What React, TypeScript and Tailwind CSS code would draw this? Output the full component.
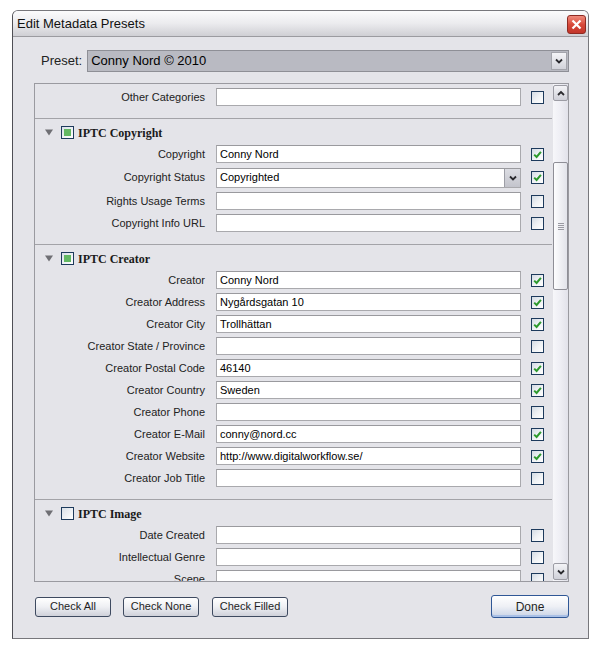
import React from "react";

function Check({ checked = false }: { checked?: boolean }) {
  return (
    <div className="w-[13px] h-[13px] shrink-0 border border-[#1d3a5c] bg-linear-to-br from-[#d3dbe4] via-[#eef1f4] to-[#ffffff] flex items-center justify-center">
      {checked && (
        <svg width="9" height="9" viewBox="0 0 9 9">
          <path d="M1.2 4.6 L3.6 7 L7.9 1.8" stroke="#2e9a2e" strokeWidth="2" fill="none" />
        </svg>
      )}
    </div>
  );
}

function Chevron({ up = false }: { up?: boolean }) {
  return (
    <svg width="8" height="6" viewBox="0 0 8 6">
      <path d={up ? "M1 5 L4 2 L7 5" : "M1 1.5 L4 4.5 L7 1.5"} stroke="#2a2a2e" strokeWidth="1.8" fill="none" />
    </svg>
  );
}

function Row({
  label,
  value = "",
  checked = false,
  select = false,
  tall = false,
}: {
  label: string;
  value?: string;
  checked?: boolean;
  select?: boolean;
  tall?: boolean;
}) {
  return (
    <div className={`flex items-center ${tall ? "h-[25px]" : "h-[22px]"} shrink-0`}>
      <div className="w-[170px] shrink-0 text-right text-[11px] text-[#222] whitespace-nowrap">{label}</div>
      <div
        className={`ml-[11px] w-[305px] shrink-0 ${select ? "h-[20px]" : "h-[18px]"} bg-white border border-[#a9a9ad] border-t-[#9a9a9e] flex items-center pl-[3px] text-[11px] text-black whitespace-nowrap overflow-hidden`}
      >
        <span className="flex-1">{value}</span>
        {select && (
          <div className="w-[16px] h-[18px] bg-linear-to-b from-[#dcdde3] to-[#c3c4cc] border-l border-[#9d9ea6] flex items-center justify-center">
            <Chevron />
          </div>
        )}
      </div>
      <div className="ml-[10px]">
        <Check checked={checked} />
      </div>
    </div>
  );
}

function Header({ title, mixed }: { title: string; mixed: boolean }) {
  return (
    <div className="h-[24px] shrink-0 flex items-center pl-[10px] pt-[3px]">
      <svg width="8" height="7" viewBox="0 0 8 7">
        <path d="M0 0.5 L8 0.5 L4 6.5 Z" fill="#6f6f74" />
      </svg>
      <div className="ml-[8px] w-[13px] h-[13px] border border-[#1d3a5c] bg-linear-to-br from-[#d9e0e8] to-white flex items-center justify-center">
        {mixed && <div className="w-[7px] h-[7px] bg-[#62b862]" />}
      </div>
      <div className="ml-[4px] font-['Liberation_Serif',serif] font-bold text-[12px] text-[#1a1a1a]">{title}</div>
    </div>
  );
}

function Sep() {
  return <div className="h-px shrink-0 bg-[#a3a3a8] mr-px" />;
}

function Btn({ children, w }: { children: React.ReactNode; w: string }) {
  return (
    <div
      className={`${w} h-[20px] rounded-[3px] border border-[#3e4a60] bg-linear-to-b from-white via-[#eeeff3] to-[#cfd1da] flex items-center justify-center text-[11px] text-[#1e1e1e]`}
    >
      {children}
    </div>
  );
}

export default function App() {
  return (
    <div className="w-[600px] h-[650px] bg-white font-['Liberation_Sans',Arial,sans-serif] pt-[10px] pl-[12px]">
      <div className="w-[577px] h-[629px] flex flex-col border border-[#77777c] border-l-[#4f4f55] rounded-t-[6px] bg-[#e4e4e9] overflow-hidden">
        {/* title bar */}
        <div className="h-[26px] shrink-0 flex items-center justify-between pl-[4px] pr-[2px] bg-linear-to-b from-[#fbfbfc] via-[#ebebee] to-[#cfcfd4] border-b border-[#9b9ba0]">
          <div className="text-[13px] text-[#111]">Edit Metadata Presets</div>
          <div className="w-[19px] h-[19px] mt-[1px] rounded-[3px] border border-[#8e2a22] bg-linear-to-b from-[#ef8a7c] via-[#d8493a] to-[#c2352a] flex items-center justify-center">
            <svg width="11" height="11" viewBox="0 0 11 11">
              <path d="M1.5 1.5 L9.5 9.5 M9.5 1.5 L1.5 9.5" stroke="white" strokeWidth="2.2" />
            </svg>
          </div>
        </div>

        {/* body */}
        <div className="flex-1 flex flex-col pl-[21px] pr-[19px] pt-[13px]">
          {/* preset row */}
          <div className="h-[22px] flex items-center">
            <div className="pl-[7px] text-[13px] text-[#222]">Preset:</div>
            <div className="ml-[5px] flex-1 h-[22px] border border-[#8e8f96] bg-[#b9bac2] flex items-center pl-[3px] pr-[1px] text-[13px] text-black">
              <span className="flex-1">Conny Nord © 2010</span>
              <div className="w-[16px] h-[18px] bg-linear-to-b from-[#f4f4f7] to-[#d2d3da] border border-[#a3a4ab] flex items-center justify-center">
                <Chevron />
              </div>
            </div>
          </div>

          {/* scroll panel */}
          <div className="mt-[11px] h-[499px] border border-[#9a9aa0] flex">
            <div className="flex-1 flex flex-col overflow-hidden pt-[2px]">
              <Row label="Other Categories" />
              <div className="h-[10px] shrink-0" />
              <Sep />
              <Header title="IPTC Copyright" mixed />
              <Row label="Copyright" value="Conny Nord" checked />
              <Row label="Copyright Status" value="Copyrighted" checked select tall />
              <Row label="Rights Usage Terms" />
              <Row label="Copyright Info URL" />
              <div className="h-[10px] shrink-0" />
              <Sep />
              <Header title="IPTC Creator" mixed />
              <Row label="Creator" value="Conny Nord" checked />
              <Row label="Creator Address" value="Nygårdsgatan 10" checked />
              <Row label="Creator City" value="Trollhättan" checked />
              <Row label="Creator State / Province" />
              <Row label="Creator Postal Code" value="46140" checked />
              <Row label="Creator Country" value="Sweden" checked />
              <Row label="Creator Phone" />
              <Row label="Creator E-Mail" value="conny@nord.cc" checked />
              <Row label="Creator Website" value="http://www.digitalworkflow.se/" checked />
              <Row label="Creator Job Title" />
              <div className="h-[10px] shrink-0" />
              <Sep />
              <Header title="IPTC Image" mixed={false} />
              <Row label="Date Created" />
              <Row label="Intellectual Genre" />
              <Row label="Scene" />
            </div>
            {/* scrollbar */}
            <div className="w-[15px] shrink-0 flex flex-col pt-[1px] pb-[1px] bg-linear-to-r from-[#f7f7fa] via-[#eeeef4] to-[#e2e2ea]">
              <div className="h-[16px] rounded-[2px] border border-[#9c9ca4] bg-linear-to-b from-[#f4f4f7] to-[#cfd0d8] flex items-center justify-center">
                <Chevron up />
              </div>
              <div className="h-[61px]" />
              <div className="h-[128px] rounded-[2px] border border-[#8e8e96] bg-linear-to-r from-[#fdfdfe] to-[#e2e3ea] flex items-center justify-center">
                <div className="w-[6px] flex flex-col gap-[1px]">
                  <div className="h-px bg-[#9a9aa2]" />
                  <div className="h-px bg-[#9a9aa2]" />
                  <div className="h-px bg-[#9a9aa2]" />
                  <div className="h-px bg-[#9a9aa2]" />
                </div>
              </div>
              <div className="flex-1" />
              <div className="h-[17px] rounded-[2px] border border-[#9c9ca4] bg-linear-to-b from-[#f4f4f7] to-[#cfd0d8] flex items-center justify-center">
                <Chevron />
              </div>
            </div>
          </div>

          {/* buttons */}
          <div className="mt-[13px] h-[23px] flex items-center">
            <div className="ml-px">
              <Btn w="w-[76px]">Check All</Btn>
            </div>
            <div className="ml-[12px]">
              <Btn w="w-[76px]">Check None</Btn>
            </div>
            <div className="ml-[13px]">
              <Btn w="w-[76px]">Check Filled</Btn>
            </div>
            <div className="flex-1" />
            <div className="w-[78px] h-[23px] rounded-[3px] border border-[#2f5796] bg-linear-to-b from-white via-[#eef0f5] to-[#c9d3e6] shadow-[inset_0_-2px_0_#a9c0e6] flex items-center justify-center text-[12px] text-[#1e1e1e]">
              Done
            </div>
          </div>
        </div>
      </div>
    </div>
  );
}
